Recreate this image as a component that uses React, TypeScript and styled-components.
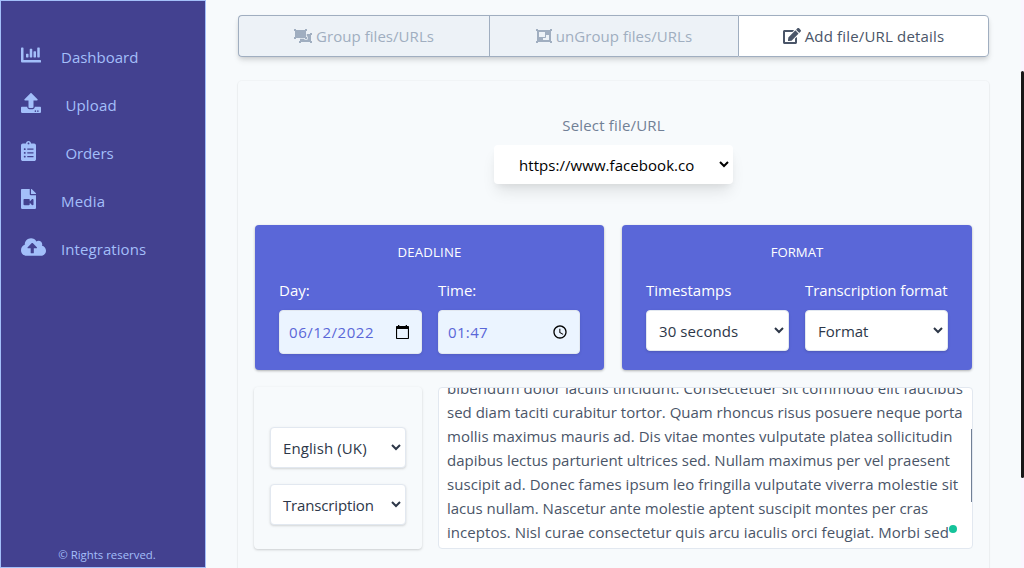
import React from "react";
import styled, { createGlobalStyle, css } from "styled-components";
import {
  FaChartBar,
  FaUpload,
  FaClipboardList,
  FaFileVideo,
  FaCloudUploadAlt,
  FaObjectGroup,
  FaObjectUngroup,
  FaEdit,
} from "react-icons/fa";

const GlobalStyle = createGlobalStyle`
  *, *::before, *::after { box-sizing: border-box; }
  body {
    margin: 0;
    overflow: hidden;
    background: #f7fafc;
    color: #4a5568;
    font-family: "Segoe UI", "Open Sans", "Noto Sans", sans-serif;
    font-size: 15px;
    line-height: 24px;
  }
  button { font: inherit; letter-spacing: inherit; }
`;

const Page = styled.div`
  display: flex;
  height: 568px;
  overflow: hidden;
`;

const Sidebar = styled.aside`
  width: 206px;
  flex: none;
  display: flex;
  flex-direction: column;
  justify-content: space-between;
  background: #434190;
  border: 1px solid #a3bffa;
  color: #a3bffa;
`;

const Nav = styled.nav`
  padding: 31px 0 0 20px;
`;

const NavItem = styled.a`
  display: flex;
  align-items: center;
  height: 48px;
`;

const NavIcon = styled.span<{ $width: number }>`
  width: 40px;
  height: 22px;
  flex: none;
  svg {
    display: block;
    width: ${(p) => p.$width}px;
    height: 20px;
  }
`;

const Label = styled.span<{ $track?: number; $indent?: number }>`
  white-space: nowrap;
  letter-spacing: ${(p) => p.$track ?? 0}px;
  padding-left: ${(p) => p.$indent ?? 0}px;
`;

const NavLabel = styled(Label)`
  padding-top: 1px;
`;

const Rights = styled.footer`
  padding: 0 0 3px 8px;
  text-align: center;
  font-size: 11.4px;
  line-height: 18px;
`;

const Main = styled.main`
  flex: 1;
  padding: 15px 32px 0;
`;

const Tabs = styled.div`
  display: flex;
  width: 751px;
  height: 42px;
  border-radius: 4px;
  box-shadow: 0 4px 6px -1px rgba(0, 0, 0, 0.12), 0 2px 4px -1px rgba(0, 0, 0, 0.1);
`;

const Tab = styled.button<{ $width: number; $iconWidth: number; $active?: boolean }>`
  width: ${(p) => p.$width}px;
  display: flex;
  align-items: center;
  justify-content: center;
  gap: 4px;
  padding: 0;
  border: 1px solid #a0aec0;
  border-right-width: 0;
  background: ${(p) => (p.$active ? "#fff" : "#edf2f7")};
  color: ${(p) => (p.$active ? "#4a5568" : "#a0aec0")};
  &:first-child { border-radius: 4px 0 0 4px; }
  &:last-child { border-right-width: 1px; border-radius: 0 4px 4px 0; }
  svg { width: ${(p) => p.$iconWidth}px; height: 16px; flex: none; }
`;

const Panel = styled.section`
  width: 751px;
  height: 520px;
  margin-top: 24px;
  padding: 32px 16px 0;
  border-radius: 4px;
  box-shadow: 0 0 0 1px rgba(0, 0, 0, 0.02), 0 1px 2px rgba(0, 0, 0, 0.1);
`;

const FilePicker = styled.div`
  display: flex;
  flex-direction: column;
  align-items: center;
  gap: 8px;
  margin-bottom: 41px;
  color: #718096;
`;

const selectFrame = css`
  display: flex;
  align-items: center;
  justify-content: space-between;
  border-radius: 4px;
  background: #fff;
  text-align: left;
`;

const FileSelect = styled.button`
  ${selectFrame}
  width: 239px;
  height: 39px;
  padding: 0 4px 0 25px;
  border: 0;
  color: #000;
  box-shadow: 0 10px 15px -3px rgba(0, 0, 0, 0.1), 0 4px 6px -2px rgba(0, 0, 0, 0.05);
`;

const Select = styled.button`
  ${selectFrame}
  width: 100%;
  height: 41px;
  padding: 0 4px 0 12px;
  border: 1px solid #e2e8f0;
  color: #2d3748;
  box-shadow: 0 1px 3px rgba(0, 0, 0, 0.1), 0 1px 2px rgba(0, 0, 0, 0.06);
`;

const Chevron = styled.svg`
  width: 10px;
  height: 8px;
  flex: none;
  margin-bottom: 2px;
`;

const Cards = styled.div`
  display: grid;
  grid-template-columns: 349px 350px;
  column-gap: 18px;
  padding-left: 1px;
`;

const Card = styled.div`
  height: 145px;
  padding: 15px 24px 0;
  border-radius: 4px;
  background: #5a67d8;
  color: #fff;
  box-shadow: 0 1px 3px rgba(0, 0, 0, 0.2), 0 1px 2px rgba(0, 0, 0, 0.1);
`;

const CardTitle = styled.h2`
  margin: 0 0 14px;
  text-align: center;
  font-size: 13.2px;
  font-weight: 400;
  line-height: 24px;
`;

const Fields = styled.div`
  display: grid;
  grid-template-columns: 143px minmax(0, 1fr);
  column-gap: 16px;
`;

const Field = styled.div`
  display: flex;
  flex-direction: column;
  gap: 8px;
`;

const DateBox = styled.div`
  display: flex;
  align-items: center;
  justify-content: space-between;
  height: 44px;
  padding: 0 11px 1px 9px;
  border: 1px solid #e2e8f0;
  border-radius: 4px;
  background: #ebf4ff;
  color: #5a67d8;
  box-shadow: 0 1px 3px rgba(0, 0, 0, 0.1);
  svg { width: 16px; height: 16px; }
`;

const Editor = styled.div`
  display: grid;
  grid-template-columns: 168px 535px;
  column-gap: 16px;
  margin-top: 17px;
`;

const Options = styled.div`
  display: flex;
  flex-direction: column;
  gap: 16px;
  height: 162px;
  padding: 40px 16px 0;
  border-radius: 4px;
  box-shadow: 0 1px 3px rgba(0, 0, 0, 0.13), 0 1px 2px rgba(0, 0, 0, 0.06);
`;

const Notes = styled.div`
  position: relative;
  height: 162px;
  overflow: hidden;
  border: 1px solid #e2e8f0;
  border-radius: 4px;
  background: #fff;
  padding-left: 8px;
`;

const Lines = styled.div`
  display: flex;
  flex-direction: column;
  margin-top: -12px;
`;

const NotesThumb = styled.span`
  position: absolute;
  top: 41px;
  right: 0;
  width: 1px;
  height: 73px;
  background: #718096;
`;

const Status = styled.span`
  position: absolute;
  right: 15px;
  bottom: 15px;
  width: 8px;
  height: 8px;
  border-radius: 50%;
  background: #15c39a;
`;

const ScrollTrack = styled.div`
  width: 3px;
  flex: none;
  padding-top: 71px;
  background: #faf5ff;
`;

const ScrollThumb = styled.div`
  height: 407px;
  border-radius: 2px;
  background: #171717;
`;

const Arrow = () => (
  <Chevron viewBox="0 0 10 8">
    <path d="M1 2l4 4 4-4" fill="none" stroke="currentColor" strokeWidth="2" />
  </Chevron>
);

const CalendarIcon = () => (
  <svg viewBox="0 0 16 16" fill="#000">
    <path d="M4 1h1.300v1h6.400V1H13v1h1c.6 0 1 .4 1 1V14c0 .6-.4 1-1 1H3c-.6 0-1-.4-1-1V3c0-.6.4-1 1-1h1zM3.100 5v8.900h10.800V5z" fillRule="evenodd" />
  </svg>
);

const ClockIcon = () => (
  <svg viewBox="0 0 24 24" fill="#000">
    <path d="M12 2C6.500 2 2 6.500 2 12s4.500 10 10 10 10-4.500 10-10S17.500 2 12 2zm0 18c-4.420 0-8-3.580-8-8s3.580-8 8-8 8 3.580 8 8-3.580 8-8 8zm.5-13H11v6l5.250 3.150.75-1.230-4.500-2.670z" />
  </svg>
);

const navItems = [
  { label: "Dashboard", Icon: FaChartBar, size: 20, indent: 0, track: 0 },
  { label: "Upload", Icon: FaUpload, size: 20, indent: 4.45, track: 0.15 },
  { label: "Orders", Icon: FaClipboardList, size: 15, indent: 4.45, track: -0.1 },
  { label: "Media", Icon: FaFileVideo, size: 15, indent: 0, track: 0.2 },
  { label: "Integrations", Icon: FaCloudUploadAlt, size: 25, indent: 0, track: 0.08 },
];

const noteLines = [
  { text: "bibendum dolor iaculis tincidunt. Consectetuer sit commodo elit faucibus", track: 0.07 },
  { text: "sed diam taciti curabitur tortor. Quam rhoncus risus posuere neque porta", track: 0 },
  { text: "mollis maximus mauris ad. Dis vitae montes vulputate platea sollicitudin", track: 0.025 },
  { text: "dapibus lectus parturient ultrices sed. Nullam maximus per vel praesent", track: 0 },
  { text: "suscipit ad. Donec fames ipsum leo fringilla vulputate viverra molestie sit", track: 0.05 },
  { text: "lacus nullam. Nascetur ante molestie aptent suscipit montes per cras", track: 0 },
  { text: "inceptos. Nisl curae consectetur quis arcu iaculis orci feugiat. Morbi sed", track: 0.05 },
];

export default function App() {
  return (
    <>
      <GlobalStyle />
      <Page>
        <Sidebar>
          <Nav>
            {navItems.map(({ label, Icon, size, indent, track }) => (
              <NavItem key={label}>
                <NavIcon $width={size}><Icon /></NavIcon>
                <NavLabel $indent={indent} $track={track}>{label}</NavLabel>
              </NavItem>
            ))}
          </Nav>
          <Rights>© Rights reserved.</Rights>
        </Sidebar>
        <Main>
          <Tabs>
            <Tab $width={251} $iconWidth={18}><FaObjectUngroup /><Label $track={0.05}>Group files/URLs</Label></Tab>
            <Tab $width={249} $iconWidth={16}><FaObjectGroup /><Label $track={0.04}>unGroup files/URLs</Label></Tab>
            <Tab $width={251} $iconWidth={18} $active><FaEdit /><Label $track={0.17}>Add file/URL details</Label></Tab>
          </Tabs>
          <Panel>
            <FilePicker>
              <Label $track={0.17}>Select file/URL</Label>
              <FileSelect><Label $track={0.05}>https://www.facebook.co</Label><Arrow /></FileSelect>
            </FilePicker>
            <Cards>
              <Card>
                <CardTitle><Label $track={0.2}>DEADLINE</Label></CardTitle>
                <Fields>
                  <Field>
                    <Label>Day:</Label>
                    <DateBox><Label $track={0.55}>06/12/2022</Label><CalendarIcon /></DateBox>
                  </Field>
                  <Field>
                    <Label>Time:</Label>
                    <DateBox><Label $track={0.35}>01:47</Label><ClockIcon /></DateBox>
                  </Field>
                </Fields>
              </Card>
              <Card>
                <CardTitle>FORMAT</CardTitle>
                <Fields>
                  <Field>
                    <Label>Timestamps</Label>
                    <Select><Label $track={0.1}>30 seconds</Label><Arrow /></Select>
                  </Field>
                  <Field>
                    <Label $track={-0.1}>Transcription format</Label>
                    <Select><Label>Format</Label><Arrow /></Select>
                  </Field>
                </Fields>
              </Card>
            </Cards>
            <Editor>
              <Options>
                <Select><Label $track={0.1}>English (UK)</Label><Arrow /></Select>
                <Select><Label $track={-0.15}>Transcription</Label><Arrow /></Select>
              </Options>
              <Notes>
                <Lines>
                  {noteLines.map(({ text, track }) => (
                    <Label key={text} $track={track}>{text}</Label>
                  ))}
                </Lines>
                <NotesThumb />
                <Status />
              </Notes>
            </Editor>
          </Panel>
        </Main>
        <ScrollTrack><ScrollThumb /></ScrollTrack>
      </Page>
    </>
  );
}
